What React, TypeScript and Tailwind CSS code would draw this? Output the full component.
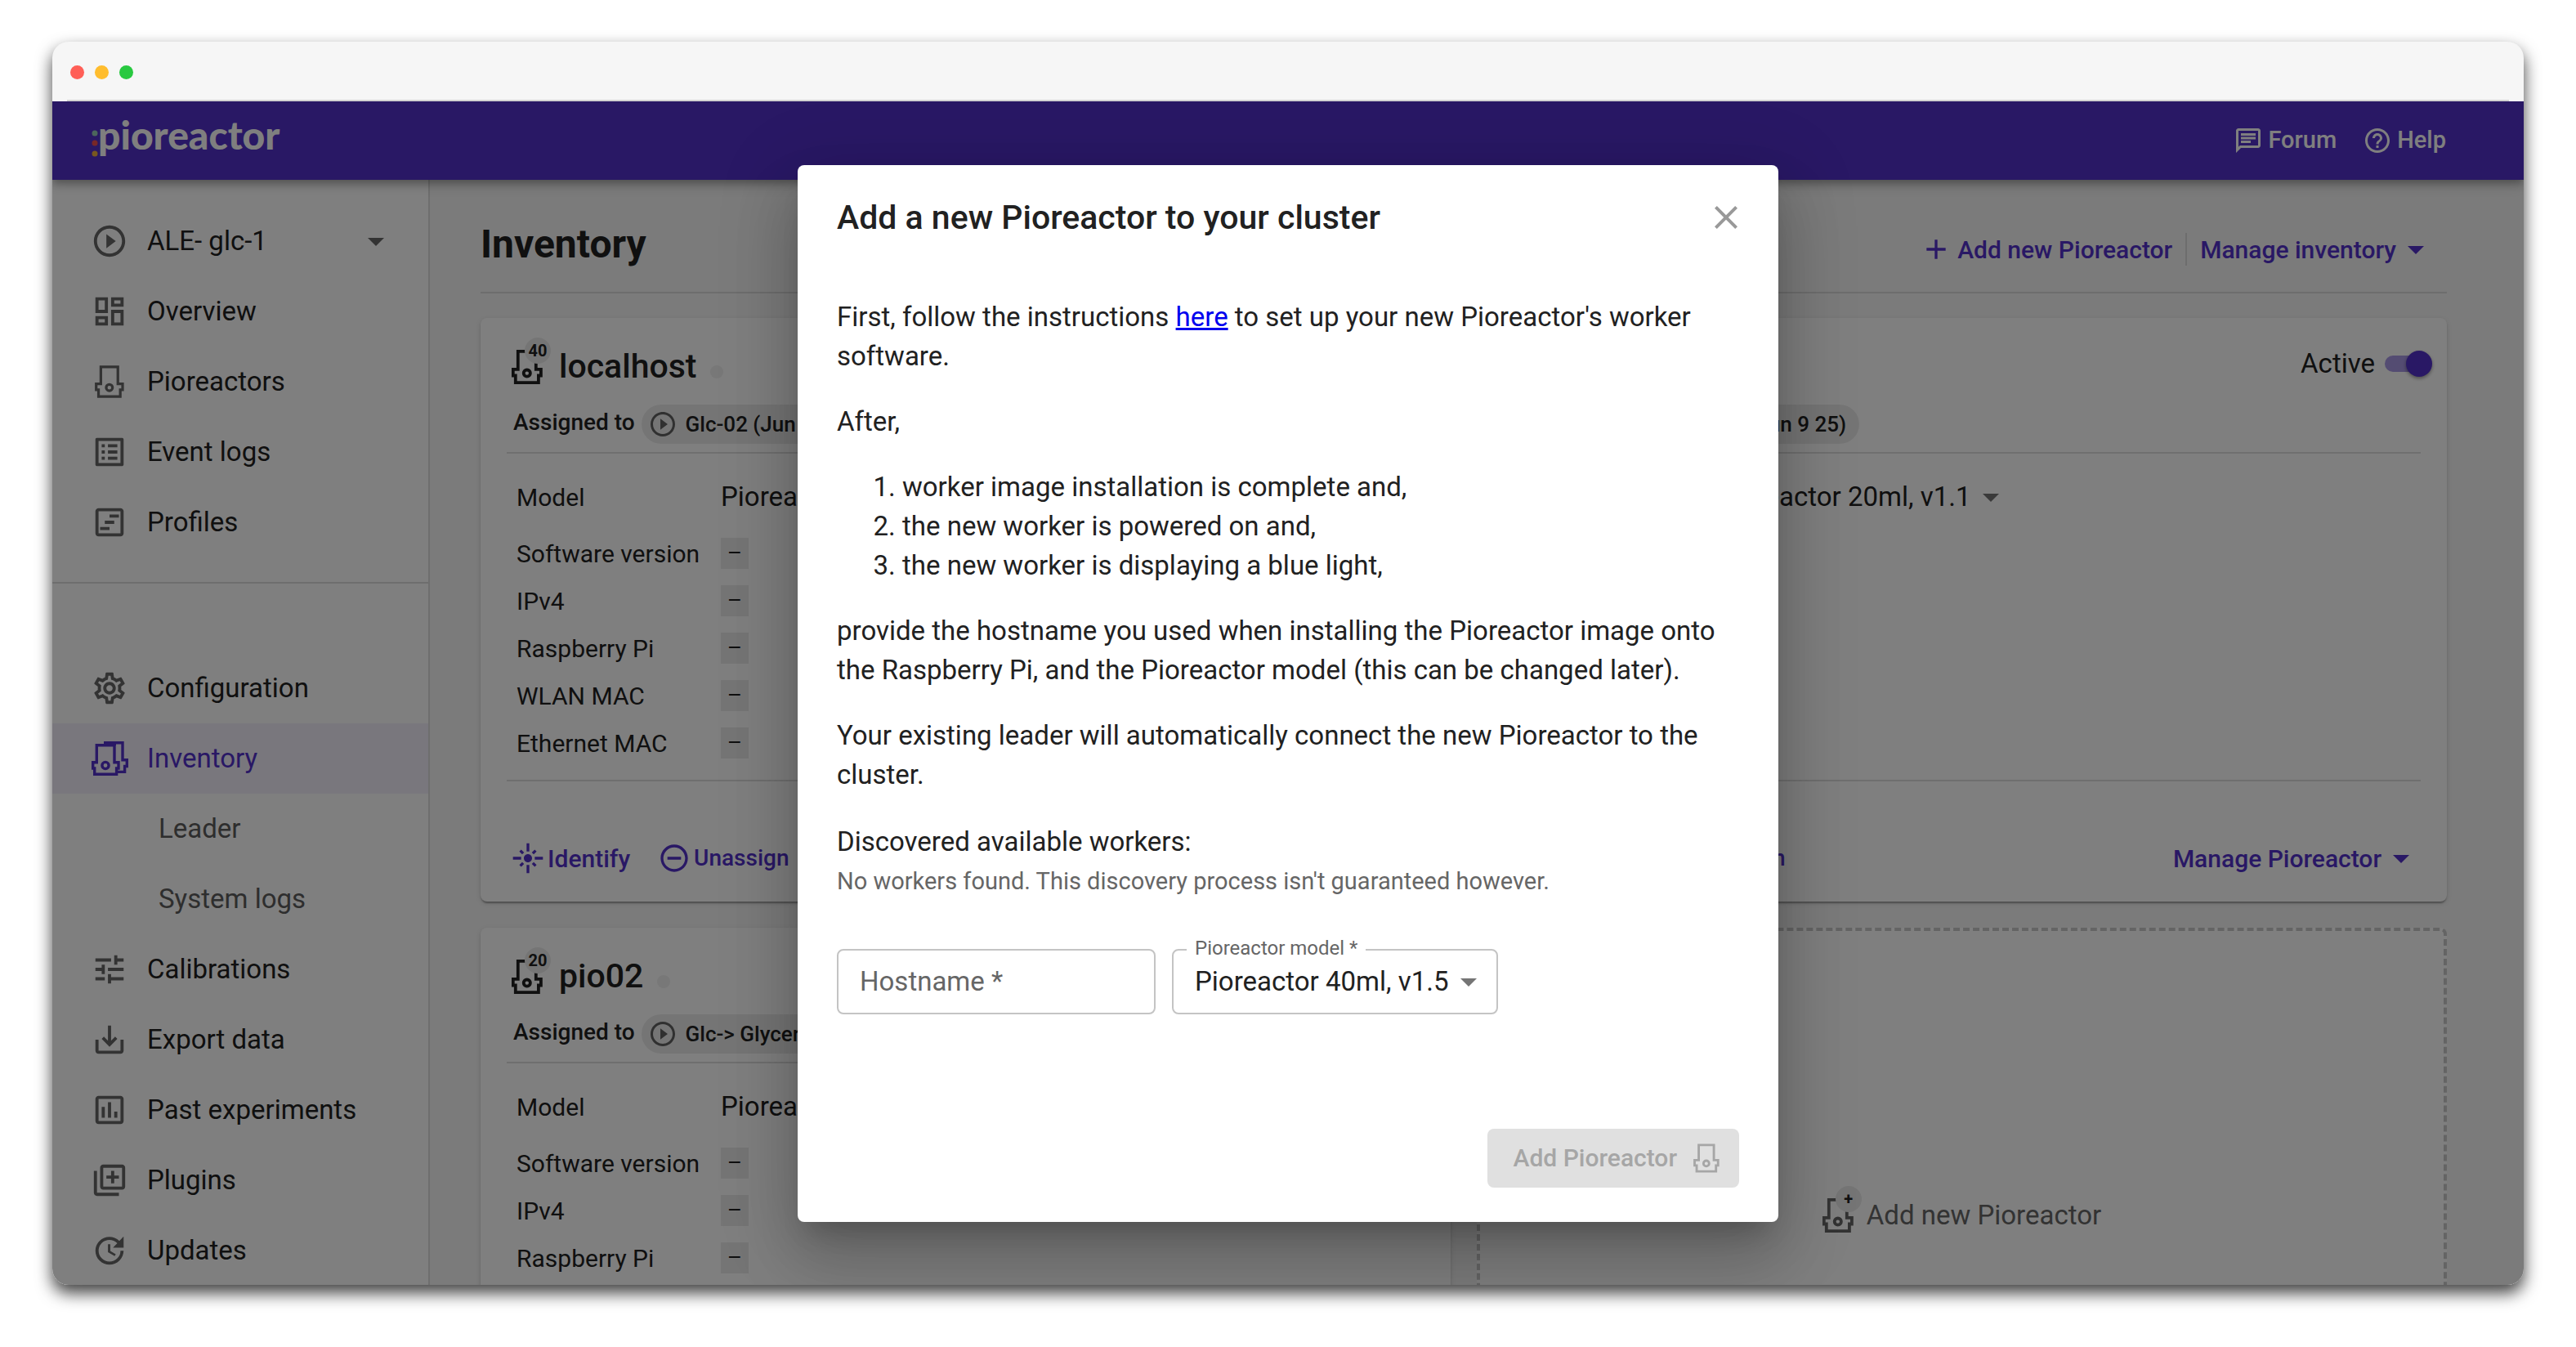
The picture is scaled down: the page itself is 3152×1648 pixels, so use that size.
import type { ReactNode } from "react";
import {
  MdAdd,
  MdArrowDropDown,
  MdClose,
  MdFlare,
  MdHelpOutline,
  MdOutlineChat,
  MdOutlineDashboard,
  MdOutlineInsertChart,
  MdOutlineLibraryAdd,
  MdOutlineListAlt,
  MdOutlineSettings,
  MdOutlineViewTimeline,
  MdPlayCircleOutline,
  MdRemoveCircleOutline,
  MdSaveAlt,
  MdTune,
  MdUpdate,
} from "react-icons/md";

function PioreactorIcon({ className, stroke = 3.4 }: { className?: string; stroke?: number }) {
  return (
    <svg viewBox="0 0 38 42" className={className} fill="none" stroke="currentColor" strokeWidth={stroke} aria-hidden="true">
      <path d="M7.8 1.8H29.8V23.8H35.9V31.5H32.9V40.2H4.8V31.5H1.8V23.8H7.8Z" />
      <circle cx="18.8" cy="28.6" r="4.1" />
    </svg>
  );
}

function InventoryIcon() {
  return (
    <svg viewBox="0 0 45 42" className="h-[42px] w-[45px]" fill="none" stroke="currentColor" strokeWidth="3.4" aria-hidden="true">
      <path d="M6.3 4.7H28V25.7H33V33H30.6V40.3H3.7V33H1.7V25.7H6.3Z" />
      <circle cx="17" cy="29.5" r="4.1" />
      <path d="M15 1.7H38V22.7H43.3V30.5H40.6V37.4H31" />
      <path d="M15 3.4H30" />
    </svg>
  );
}

function NavItem({ icon, label, active = false }: { icon: ReactNode; label: string; active?: boolean }) {
  return (
    <li>
      <a
        href="#"
        className={
          active
            ? "flex h-[86px] items-center gap-3 bg-[#f2eefa] pl-9 text-[#5331ca]"
            : "flex h-[86px] items-center gap-3 pl-9 text-[#212121]"
        }
      >
        <span className={active ? "flex w-[68px] justify-center" : "flex w-[68px] justify-center text-[#666666]"}>{icon}</span>
        {label}
      </a>
    </li>
  );
}

function SubItem({ label }: { label: string }) {
  return (
    <li>
      <a href="#" className="flex h-[86px] items-center pl-[130px] text-[#5c5c5c]">
        {label}
      </a>
    </li>
  );
}

function Sidebar() {
  return (
    <nav className="w-[462px] shrink-0 border-r-2 border-[#dcdcdc] bg-white pt-8 text-[33px]">
      <div className="flex h-[86px] items-center gap-3 pr-10 pl-9">
        <span className="flex w-[68px] justify-center text-[#666666]">
          <MdPlayCircleOutline size={46} />
        </span>
        <select aria-label="Experiment" className="min-w-0 flex-1 appearance-none text-[#212121]">
          <option>ALE- glc-1</option>
        </select>
        <MdArrowDropDown size={48} className="text-[#666666]" />
      </div>
      <ul>
        <NavItem icon={<MdOutlineDashboard size={46} />} label="Overview" />
        <NavItem icon={<PioreactorIcon stroke={3.4} className="h-10 w-9" />} label="Pioreactors" />
        <NavItem icon={<MdOutlineListAlt size={46} />} label="Event logs" />
        <NavItem icon={<MdOutlineViewTimeline size={46} />} label="Profiles" />
      </ul>
      <hr className="mt-[30px] mb-[85px] border-t-2 border-[#dcdcdc]" />
      <ul>
        <NavItem icon={<MdOutlineSettings size={46} />} label="Configuration" />
        <NavItem icon={<InventoryIcon />} label="Inventory" active />
        <SubItem label="Leader" />
        <SubItem label="System logs" />
        <NavItem icon={<MdTune size={46} />} label="Calibrations" />
        <NavItem icon={<MdSaveAlt size={46} />} label="Export data" />
        <NavItem icon={<MdOutlineInsertChart size={46} />} label="Past experiments" />
        <NavItem icon={<MdOutlineLibraryAdd size={46} />} label="Plugins" />
        <NavItem icon={<MdUpdate size={46} />} label="Updates" />
      </ul>
    </nav>
  );
}

function BadgedIcon({ badge, className }: { badge: string; className?: string }) {
  return (
    <span className="relative flex">
      <PioreactorIcon stroke={3.8} className={className} />
      <span className="absolute -top-[15px] left-4 flex size-8 items-center justify-center rounded-full bg-[#ebebeb] text-[20px] font-bold text-[#212121]">
        {badge}
      </span>
    </span>
  );
}

function WorkerCard({ name, volume, experiment, model }: { name: string; volume: string; experiment: string; model: string }) {
  return (
    <section className="rounded-lg bg-white px-8 pt-8 pb-[21px] text-[#212121] shadow-[0_4px_2px_-2px_rgba(0,0,0,0.2),0_2px_2px_rgba(0,0,0,0.14),0_2px_6px_rgba(0,0,0,0.12)]">
      <div className="flex h-14 items-center pl-1.5">
        <BadgedIcon badge={volume} className="h-[42px] w-[38px]" />
        <h2 className="ml-5 text-[41px] font-medium">{name}</h2>
        <span className="mt-3 ml-[17px] size-4 rounded-full bg-[#f0f0f0]" />
        <label className="ml-auto flex h-12 items-center gap-3 self-start text-[33px]">
          Active
          <input
            type="checkbox"
            role="switch"
            defaultChecked
            className="relative -mr-2 h-5 w-[52px] appearance-none rounded-full bg-[#a998e5] before:absolute before:-top-1.5 before:left-[26px] before:size-8 before:rounded-full before:bg-[#5331ca] before:shadow-[0_2px_4px_rgba(0,0,0,0.4)]"
          />
        </label>
      </div>
      <div className="mt-[18px] flex items-center gap-2 pl-2 text-[28px] font-medium">
        <span className="pb-1">Assigned to</span>
        <a href="#" className="flex h-12 items-center gap-2.5 rounded-full bg-[#ebebeb] px-2 pr-4 text-[26px]">
          <MdPlayCircleOutline size={36} className="text-[#616161]" />
          {experiment}
        </a>
      </div>
      <hr className="mt-2.5 border-t-2 border-[#dedede]" />
      <table className="mt-[13px] text-[30px]">
        <tbody>
          <tr className="h-20">
            <th scope="row" className="w-[262px] pl-3 text-left font-normal">
              Model
            </th>
            <td className="text-[33px]">
              <span className="flex items-center">
                <select aria-label={name + " model"} className="appearance-none">
                  <option>{model}</option>
                </select>
                <MdArrowDropDown size={48} className="text-[#757575]" />
              </span>
            </td>
          </tr>
          {["Software version", "IPv4", "Raspberry Pi", "WLAN MAC", "Ethernet MAC"].map((row) => (
            <tr key={row} className="h-[58px]">
              <th scope="row" className="w-[262px] pl-3 text-left font-normal">
                {row}
              </th>
              <td>
                <code className="flex h-[38px] w-[34px] items-center justify-center bg-[#ebebeb] font-['Roboto',sans-serif] text-[28px]">–</code>
              </td>
            </tr>
          ))}
        </tbody>
      </table>
      <hr className="mt-4 border-t-2 border-[#dedede]" />
      <div className="mt-[62px] flex h-16 items-center pl-1.5 text-[30px] font-medium text-[#5331ca]">
        <button type="button" className="flex items-center gap-1">
          <MdFlare size={40} />
          Identify
        </button>
        <button type="button" className="ml-[34px] flex items-center gap-1 text-[28px]">
          <MdRemoveCircleOutline size={40} />
          Unassign
        </button>
        <button type="button" className="ml-auto flex items-center">
          Manage Pioreactor
          <MdArrowDropDown size={48} />
        </button>
      </div>
    </section>
  );
}

function Dialog() {
  return (
    <div
      role="dialog"
      aria-modal="true"
      aria-labelledby="dialog-title"
      className="w-[1200px] rounded-lg bg-white px-12 pt-[38px] pb-[42px] text-[33px] leading-[48px] text-[#212121] shadow-[0_22px_30px_-14px_rgba(0,0,0,0.2),0_48px_76px_6px_rgba(0,0,0,0.14),0_18px_92px_16px_rgba(0,0,0,0.12)]"
    >
      <div className="flex h-[52px] items-center justify-between">
        <h2 id="dialog-title" className="text-[41px] font-medium">
          Add a new Pioreactor to your cluster
        </h2>
        <button type="button" aria-label="Close" className="-mr-2 text-[#999999]">
          <MdClose size={48} />
        </button>
      </div>
      <p className="mt-[72px]">
        First, follow the instructions{" "}
        <a href="#" className="text-[#0000ee] underline">
          here
        </a>{" "}
        to set up your new Pioreactor's worker software.
      </p>
      <p className="mt-8">After,</p>
      <ol className="mt-8 list-decimal pl-20">
        <li>worker image installation is complete and,</li>
        <li>the new worker is powered on and,</li>
        <li>the new worker is displaying a blue light,</li>
      </ol>
      <p className="mt-8">
        provide the hostname you used when installing the Pioreactor image onto the Raspberry Pi, and the Pioreactor model (this can be
        changed later).
      </p>
      <p className="mt-8">Your existing leader will automatically connect the new Pioreactor to the cluster.</p>
      <p className="mt-[34px]">Discovered available workers:</p>
      <p className="text-[29px] text-[#666666]">No workers found. This discovery process isn't guaranteed however.</p>
      <div className="mt-[59px] flex gap-5">
        <input
          aria-label="Hostname"
          placeholder="Hostname *"
          className="h-20 w-[390px] rounded-lg border-2 border-[#c4c4c4] px-[26px] placeholder:text-[#666666]"
        />
        <div className="relative flex h-20 items-center rounded-lg border-2 border-[#c4c4c4] pr-2.5 pl-[26px]">
          <label htmlFor="model" className="absolute -top-[27px] left-4 bg-white px-2.5 text-[24px] text-[#666666]">
            Pioreactor model *
          </label>
          <select id="model" className="appearance-none">
            <option>Pioreactor 40ml, v1.5</option>
          </select>
          <MdArrowDropDown size={48} className="text-[#757575]" />
        </div>
      </div>
      <div className="mt-[140px] flex justify-end">
        <button
          type="button"
          disabled
          className="flex h-[72px] items-center gap-5 rounded-lg bg-[#e0e0e0] pr-6 pl-8 text-[30px] font-medium text-[#a6a6a6]"
        >
          Add Pioreactor
          <PioreactorIcon stroke={3.4} className="h-9 w-8" />
        </button>
      </div>
    </div>
  );
}

export default function App() {
  return (
    <div className="flex h-screen flex-col bg-white px-16 pt-[51px] pb-[76px] font-['Roboto',sans-serif]">
      <div className="flex min-h-0 flex-1 flex-col overflow-hidden rounded-[20px] bg-[#f6f6f6] shadow-[0_10px_20px_rgba(0,0,0,0.75)]">
        <div className="flex h-[73px] shrink-0 flex-col justify-between">
          <div className="flex gap-[13px] pt-[29px] pl-[22px]">
            <span className="size-[17px] rounded-full bg-[#ff5f57]" />
            <span className="size-[17px] rounded-full bg-[#ffbd2e]" />
            <span className="size-[17px] rounded-full bg-[#28c940]" />
          </div>
          <div className="mx-[18px] h-0.5 bg-[#d2d2d2]" />
        </div>

        <div className="relative flex min-h-0 flex-1 flex-col overflow-hidden">
          <header className="relative z-10 flex h-24 shrink-0 items-center justify-between bg-[#5331ca] pr-[95px] pl-12 text-white shadow-[0_4px_8px_-2px_rgba(0,0,0,0.2),0_8px_10px_rgba(0,0,0,0.14),0_2px_20px_rgba(0,0,0,0.12)]">
            <a href="#" className="mb-3.5 flex items-center">
              <svg viewBox="0 0 8 36" className="mt-6 h-9 w-2" aria-hidden="true">
                <circle cx="4" cy="4" r="3.5" fill="#98ccb8" />
                <circle cx="4" cy="16" r="3.5" fill="#ee5050" />
                <circle cx="4" cy="29" r="3.5" fill="#f0b040" />
              </svg>
              <span className="font-['Lato',sans-serif] text-[48px] leading-[56px] font-black">pioreactor</span>
            </a>
            <div className="flex items-center gap-8 text-[29px] font-medium">
              <a href="#" className="flex items-center gap-1.5">
                <MdOutlineChat size={36} />
                Forum
              </a>
              <a href="#" className="flex items-center gap-1.5">
                <MdHelpOutline size={36} />
                Help
              </a>
            </div>
          </header>

          <div className="flex min-h-0 flex-1 overflow-hidden">
            <Sidebar />
            <main className="min-w-0 flex-1 overflow-hidden bg-[#f6f6f6] pt-[51px] pr-[94px] pl-[62px]">
              <div className="flex h-[88px] items-start justify-between border-b-2 border-[#dadada]">
                <h1 className="text-[48px] leading-[56px] font-bold text-[#212121]">Inventory</h1>
                <div className="flex items-center gap-4 pt-2.5 pr-3.5 text-[30px] font-medium text-[#5331ca]">
                  <button type="button" className="flex items-center gap-1.5">
                    <MdAdd size={40} />
                    Add new Pioreactor
                  </button>
                  <span className="h-10 w-0.5 bg-[#dadada]" />
                  <button type="button" className="flex items-center">
                    Manage inventory
                    <MdArrowDropDown size={48} />
                  </button>
                </div>
              </div>
              <div className="mt-[30px] grid grid-cols-2 gap-8">
                <WorkerCard name="localhost" volume="40" experiment="Glc-02 (Jun 9 25)" model="Pioreactor 40ml, v1.5" />
                <WorkerCard name="pio01" volume="20" experiment="Glc-02 (Jun 9 25)" model="Pioreactor 20ml, v1.1" />
                <WorkerCard name="pio02" volume="20" experiment="Glc-> Glycerol" model="Pioreactor 20ml, v1.1" />
                <button
                  type="button"
                  className="flex items-center justify-center gap-4 rounded-lg border-4 border-dashed border-[#c8c8c8] bg-white pb-2.5 text-[33px] text-[#666666]"
                >
                  <BadgedIcon badge="+" className="h-[42px] w-[38px]" />
                  Add new Pioreactor
                </button>
              </div>
            </main>
          </div>

          <div className="absolute inset-0 z-20 flex items-center justify-center bg-black/50">
            <Dialog />
          </div>
        </div>
      </div>
    </div>
  );
}
